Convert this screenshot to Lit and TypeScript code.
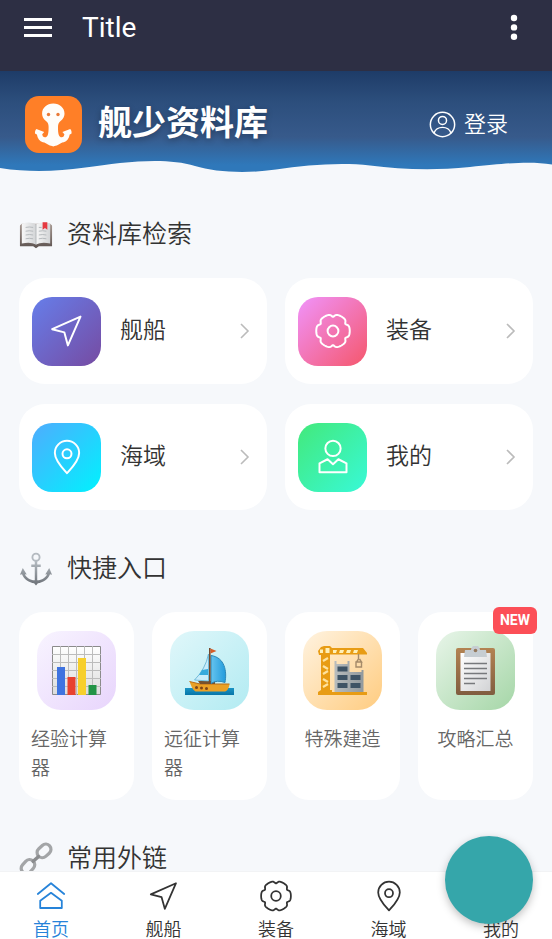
import { LitElement, html, css, svg } from "lit";
import { customElement, property } from "lit/decorators.js";

// Six round lobes parted by narrow notches.
const gearPath = (() => {
  const points: string[] = [];
  for (let deg = 0; deg < 360; deg += 3) {
    const fromNotch = Math.abs((deg % 60) - 30);
    const r = 18.6 - 2.8 * Math.exp(-((fromNotch / 8) ** 2));
    const a = (deg * Math.PI) / 180;
    points.push(`${(20 + r * Math.cos(a)).toFixed(2)} ${(20 + r * Math.sin(a)).toFixed(2)}`);
  }
  return `M${points.join("L")}z`;
})();

const shapes: Record<string, any> = {
  ship: svg`<path d="M35 4 3.500 18l13.500 3.500L21 36z" />`,
  gear: svg`<path d=${gearPath} /><circle cx="20" cy="20" r="6" />`,
  pin: svg`<path d="M20 38C16 33.500 6.500 24 6.500 15.500a13.500 13.500 0 0 1 27 0c0 8.500-9.500 18-13.500 22.500z" /><circle cx="20" cy="16.500" r="5" />`,
  user: svg`<circle cx="20" cy="10.500" r="8.500" /><path d="M5 37V27l9-4.500 6 5.500 6-5.500 9 4.500v10z" />`,
  home: svg`<path d="M3.500 17.500 20 4l16.500 13.500M6.500 35V26L20 16l13.500 10v9z" />`,
  account: svg`<circle cx="20" cy="20" r="18" /><circle cx="20" cy="14" r="6" /><path d="M7.500 32.500c4-11 21-11 25 0" />`,
};

@customElement("line-icon")
class LineIcon extends LitElement {
  @property() name = "ship";
  static styles = css`
    :host { display: block; }
    .shape { display: block; width: 100%; height: 100%; fill: none; stroke: currentColor; stroke-width: 2.2; stroke-linejoin: round; stroke-linecap: round; }
  `;
  render() {
    return html`<svg class="shape" viewBox="0 0 40 40" aria-hidden="true">${shapes[this.name]}</svg>`;
  }
}

const book = svg`
  <defs>
    <linearGradient id="cover" x2="0" y2="1"><stop stop-color="#a89a93"/><stop offset="1" stop-color="#5d5350"/></linearGradient>
    <linearGradient id="leaf"><stop stop-color="#f7f7f7"/><stop offset="1" stop-color="#d3d5d7"/></linearGradient>
  </defs>
  <path fill="url(#cover)" d="M1 8 3 6h30l2 2v22H21l-3 2-3-2H1z"/>
  <path fill="url(#leaf)" d="M3 6q9-3 15 1v21q-6-3-15-1z"/>
  <path fill="url(#leaf)" d="M33 6q-9-3-15 1v21q6-3 15-1z"/>
  <path fill="#e53940" d="M25 4.500h5v8l-2.500-2-2.500 2z"/>
  <path fill="none" stroke="#b3b7ba" d="M7 10q4-1 8 0M7 14q4-1 8 0M7 18q4-1 8 0M7 22q4-1 8 0M21 10h3M21 14q4-1 8 0M21 18q4-1 8 0M21 22q4-1 8 0M18 7v21"/>`;

const anchor = svg`
  <defs><linearGradient id="steel" x2="0" y2="1"><stop stop-color="#b6bdc3"/><stop offset="1" stop-color="#6b7076"/></linearGradient></defs>
  <circle cx="18" cy="5.500" r="3.800" fill="none" stroke="#b4bac0" stroke-width="2"/>
  <path fill="url(#steel)" d="M16.700 9h2.600v4.200H23v2.600h-3.700V30c5-.4 9-3 10.500-6.500l-2 .3L32 17l3 7-2.200-.5C31 29 25 32.500 20 33l-2 2.500-2-2.500C11 32.500 5 29 3.200 23.500L1 24l3-7 4.200 6.800-2-.3C7.700 27 11.700 29.600 16.700 30V15.800H13v-2.600h3.700z"/>`;

const chain = svg`
  <g fill="none" stroke="#a3a5a7" stroke-width="3.400">
    <rect x="-5.500" y="-8" width="11" height="16" rx="5.500" transform="translate(26.500 9.500) rotate(48)"/>
    <rect x="-5.500" y="-8" width="11" height="16" rx="5.500" transform="translate(9.500 26) rotate(42)"/>
  </g>
  <path d="m15 20.500 5.500-5" stroke="#8b8d8f" stroke-width="3.600" stroke-linecap="round"/>`;

const chart = svg`
  <defs><linearGradient id="paper" x2="0" y2="1"><stop stop-color="#fff"/><stop offset="1" stop-color="#dcdcdc"/></linearGradient></defs>
  <path fill="url(#paper)" stroke="#8b8b8b" d="M.5.500h48v48H.5z"/>
  <path fill="none" stroke="#bcbcbc" d="M0 8.500h49M0 16.500h49M0 24.500h49M0 32.500h49M0 40.500h49M8.500 0v49M16.500 0v49M24.500 0v49M32.500 0v49M40.500 0v49"/>
  <path fill="#3f73e0" d="M5 21h8v28H5z"/><path fill="#e8412f" d="M15.500 31h8v18h-8z"/><path fill="#f7cf2c" d="M26 12h8v37h-8z"/><path fill="#219446" d="M36.500 39h8v10h-8z"/>`;

const boat = svg`
  <defs>
    <linearGradient id="sail"><stop stop-color="#66c4ee"/><stop offset="1" stop-color="#229bdc"/></linearGradient>
    <linearGradient id="sea" x2="0" y2="1"><stop stop-color="#1a94c4"/><stop offset="1" stop-color="#0675a8"/></linearGradient>
  </defs>
  <path fill="url(#sea)" d="M0 42h49v7H0z"/>
  <path fill="#eaa126" d="M4.500 35.500 15 38h29.500c-.5 5-3 7.500-5 7.500h-29C7 43 6 39 4.500 35.500z"/>
  <path fill="none" stroke="#b96d17" d="M4.500 35.500 15 38h29.500"/>
  <path fill="#77512d" d="M13 35h17v3H15z"/>
  <path fill="#c8edfb" stroke="#5eaed0" stroke-width=".8" d="M23.500 8q-3 15-14 26l14 1z"/>
  <path fill="#35aadd" d="m17 24 6-1v6h-9z"/>
  <path fill="url(#sail)" stroke="#2b87b7" d="M26 9.500c14 2 16 16 14 27q-8-3-14 1z"/>
  <path fill="#76492c" d="M24 2h1.600v36H24z"/><path fill="#d65d28" d="m25.500 2.500 6 2.500-6 2.500z"/>
  <g fill="#7b451b"><circle cx="11.500" cy="41.500" r="1.500"/><circle cx="16.500" cy="42" r="1.500"/><circle cx="21.500" cy="42.500" r="1.500"/></g>`;

const crane = svg`
  <defs><linearGradient id="wall"><stop stop-color="#b8bcbd"/><stop offset="1" stop-color="#92999d"/></linearGradient></defs>
  <path fill="url(#wall)" d="M16.500 15h2v3h11v-3h2v11h12v-2h2v22h-29z"/>
  <path fill="#3e5365" d="M19.500 20.500h10v5h-10zM19.500 29h10v5h-10zM19.500 37h10v5h-10zM32.500 29h10v5h-10zM32.500 37h10v5h-10z"/>
  <path fill="#e89c14" d="M0 5 3 1l3-1h6l2 2h31l4 5v1.500H12V44h2v2h35v3H0v-3l3-2V9H1z"/>
  <path fill="none" stroke="#ffe39e" stroke-width="2.200" d="M5 15l5-3M5 20l5 3M5 28l5-3M5 33l5 3M5 41l5-3"/>
  <path fill="#fff0b8" d="M2 3.500h3v3.500H2zM7.500 2h4v5h-4zM15 4h4l-1 3h-3zM22 4h4l-1 3h-4zM29 4h4l-1 3h-4zM36 4h4l-1 3h-4z"/>
  <path fill="none" stroke="#a68b69" stroke-width="1.400" d="M40.500 8v5l-2 3h5l-2-3M38 16h5.500v5H38z"/>`;

const clipboard = svg`
  <defs>
    <linearGradient id="wood" x2="0" y2="1"><stop stop-color="#b38352"/><stop offset="1" stop-color="#805d3f"/></linearGradient>
    <linearGradient id="sheet" x2="1" y2="1"><stop stop-color="#fff"/><stop offset="1" stop-color="#d2d3d5"/></linearGradient>
  </defs>
  <rect x="5" y="2" width="39" height="47" rx="2" fill="url(#wood)"/>
  <path fill="url(#sheet)" d="M9.500 7h30v38h-30z"/>
  <path fill="#c6cdd2" d="M14 4h6a4.500 4.500 0 0 1 9 0h6l1 7H13z"/><circle cx="24.500" cy="4.500" r="1.800" fill="#93785b"/>
  <path stroke="#77797c" stroke-width="1.400" d="M13 17.500h23M13 22.500h23M13 27.500h23M13 32.500h23M13 37.500h11"/>`;

const logo = svg`
  <rect width="57" height="57" rx="14" fill="#ff7f27"/>
  <path fill="#fffdf9" d="M28.300 7.500c6.500 0 11.200 4.500 11.200 10 0 4-2.500 6.500-4.700 8.300-1.300 1.200-1.800 3-1.800 5.200 0 3 .1 6 .8 8 1 2.600 3.600 3 5 1.200l.6-2-2-2.200 7.800-3c1.300 1.300 1.700 3 1.200 4.800l-1.700.7c-.6 4-2.700 6.700-6 7.700-2 .3-3.700 1.300-5.500 2.600-2.200 1.300-3 .9-4.900 1.700-1.900-.8-2.700-.4-4.900-1.700-1.800-1.300-3.500-2.300-5.500-2.600-3.300-1-5.400-3.700-6-7.700l-1.700-.7c-.5-1.800-.1-3.500 1.200-4.800l7.800 3-2 2.200.6 2c1.400 1.800 4 1.400 5-1.200.7-2 .8-5 .8-8 0-2.200-.5-4-1.800-5.200-2.200-1.800-4.700-4.300-4.700-8.300 0-5.500 4.700-10 11.200-10z"/>
  <circle cx="23.500" cy="18.500" r="1.700" fill="#e97a38"/><circle cx="33" cy="18.500" r="1.700" fill="#e97a38"/>`;

@customElement("app-root")
class AppRoot extends LitElement {
  static styles = css`
    :host {
      display: flex; flex-direction: column; height: 100vh; position: relative; overflow: hidden;
      background: #f6f8fb; color: #333;
      font-family: Roboto, "Noto Sans CJK SC", sans-serif; font-weight: 350;
    }
    * { box-sizing: border-box; }
    button { font: inherit; color: inherit; background: none; border: 0; padding: 0; }
    a { color: inherit; text-decoration: none; }
    h1, h2 { margin: 0; font-weight: inherit; }
    svg { display: block; }
    .bar { display: flex; align-items: center; gap: 26px; height: 71px; padding: 0 20px 16px; background: #2d2f44; color: #fff; flex: none; }
    .bar-title { flex: 1; font-size: 28px; line-height: 36px; font-weight: 400; }
    .menu, .more { width: 36px; height: 28px; display: grid; place-items: center; }
    .page { flex: 1; min-height: 0; overflow-y: auto; scrollbar-width: none; }
    .hero { display: flex; flex-direction: column; height: 106px; background: linear-gradient(#1e3c68 0, #2c4e7c 30px, #375a8b 66px, #2f78ba 94px, #2f78ba 100%); }
    .hero-row { display: flex; align-items: center; gap: 16px; padding: 25px 44px 8px 25px; flex: 1; color: #fff; }
    .logo { width: 57px; height: 57px; flex: none; }
    .brand { flex: 1; padding-bottom: 4px; font-size: 34px; line-height: 40px; font-weight: 700; text-shadow: 0 2px 6px rgba(0, 0, 0, .3); }
    .login { display: flex; align-items: center; gap: 8px; font-size: 22px; line-height: 32px; }
    .login-icon { width: 27px; height: 27px; }
    .wave { width: 100%; height: 16px; flex: none; }
    .content { display: flex; flex-direction: column; gap: 41px; padding: 40px 19px; }
    .section { display: flex; flex-direction: column; gap: 25px; }
    .heading { display: flex; align-items: center; gap: 14px; font-size: 25px; line-height: 36px; }
    .emoji { width: 34px; height: 34px; }
    .cards { display: grid; grid-template-columns: 1fr 1fr; gap: 20px 18px; }
    .card { display: flex; align-items: center; height: 106px; padding: 0 17px 0 13px; background: #fff; border-radius: 26px; font-size: 23px; line-height: 32px; }
    .tile { display: grid; place-items: center; width: 69px; height: 69px; margin-right: 19px; border-radius: 20px; color: #fff; }
    .tile-icon { width: 36px; height: 36px; }
    .card-label { flex: 1; }
    .violet { background: linear-gradient(135deg, #667eea, #764ba2); }
    .pink { background: linear-gradient(135deg, #f093fb, #f5576c); }
    .sky { background: linear-gradient(135deg, #4facfe, #00f2fe); }
    .green { background: linear-gradient(135deg, #43e97b, #38f9d7); }
    .quick { display: grid; grid-template-columns: repeat(4, 1fr); gap: 18px; }
    .entry { position: relative; display: flex; flex-direction: column; align-items: center; gap: 15px; padding: 19px 12px 17px; background: #fff; border-radius: 24px; color: #666; font-size: 19px; line-height: 29px; }
    .picture { display: grid; place-items: center; width: 79px; height: 79px; border-radius: 24px; }
    .art { width: 49px; height: 49px; }
    .lilac { background: linear-gradient(135deg, #f8f4ff, #e8d5fc); }
    .aqua { background: linear-gradient(135deg, #e0f7fa, #b2ebf2); }
    .amber { background: linear-gradient(135deg, #fff3e0, #ffcc80); }
    .mint { background: linear-gradient(135deg, #e8f5e9, #a5d6a7); }
    .badge { position: absolute; top: -5px; right: -4px; padding: 0 7px; border-radius: 6px; background: #fc4f57; color: #fff; font-size: 14px; line-height: 27px; font-weight: 700; }
    .tabs { display: flex; justify-content: space-between; flex: none; padding: 8px 32px 0; height: 68px; background: #fff; border-top: 1px solid #f2f3f5; }
    .tab { display: flex; flex-direction: column; align-items: center; gap: 5px; width: 38px; font-size: 18px; line-height: 26px; white-space: nowrap; }
    .tab-icon { width: 32px; height: 32px; }
    .active { color: #2683d9; }
    .fab { position: absolute; right: 19px; bottom: 15px; width: 88px; height: 88px; border-radius: 50%; background: #35a6aa; box-shadow: 0 3px 8px rgba(0, 0, 0, .25); }
  `;

  cards = [
    ["ship", "舰船", "violet"],
    ["gear", "装备", "pink"],
    ["pin", "海域", "sky"],
    ["user", "我的", "green"],
  ];
  entries = [
    { art: chart, label: "经验计算器", tone: "lilac", badge: "" },
    { art: boat, label: "远征计算器", tone: "aqua", badge: "" },
    { art: crane, label: "特殊建造", tone: "amber", badge: "" },
    { art: clipboard, label: "攻略汇总", tone: "mint", badge: "NEW" },
  ];
  tabs = [["home", "首页"], ["ship", "舰船"], ["gear", "装备"], ["pin", "海域"], ["user", "我的"]];

  heading(art: unknown, text: string) {
    return html`<h2 class="heading"><svg class="emoji" viewBox="0 0 36 36" aria-hidden="true">${art}</svg>${text}</h2>`;
  }

  render() {
    return html`
      <header class="bar">
        <button class="menu" aria-label="Menu"><svg width="28" height="20" fill="#fff"><path d="M0 0h28v3H0zM0 8h28v3H0zM0 16h28v3H0z"/></svg></button>
        <h1 class="bar-title">Title</h1>
        <button class="more" aria-label="More"><svg width="8" height="28" fill="#fff"><circle cx="4" cy="4" r="3.200"/><circle cx="4" cy="13.400" r="3.200"/><circle cx="4" cy="22.800" r="3.200"/></svg></button>
      </header>
      <main class="page">
        <div class="hero">
          <div class="hero-row">
            <svg class="logo" viewBox="0 0 57 57" aria-hidden="true">${logo}</svg>
            <h2 class="brand">舰少资料库</h2>
            <button class="login"><line-icon class="login-icon" name="account"></line-icon>登录</button>
          </div>
          <svg class="wave" viewBox="0 0 552 16" preserveAspectRatio="none" aria-hidden="true">
            <path fill="#f6f8fb" d="M0 7C50 15 90 5 120 2S175-1 195 5 245 13 276 8.500 340 1 370 4.500 430 10 470 6 530 0 552 3.500V17H0z"/>
          </svg>
        </div>
        <div class="content">
          <section class="section">
            ${this.heading(book, "资料库检索")}
            <div class="cards">
              ${this.cards.map(([icon, label, tone]) => html`
                <a class="card" href="#${icon}">
                  <span class="tile ${tone}"><line-icon class="tile-icon" name=${icon}></line-icon></span>
                  <span class="card-label">${label}</span>
                  <svg width="10" height="16" fill="none" stroke="#bbb" stroke-width="1.600"><path d="m1 1 7 7-7 7"/></svg>
                </a>`)}
            </div>
          </section>
          <section class="section">
            ${this.heading(anchor, "快捷入口")}
            <div class="quick">
              ${this.entries.map((e) => html`
                <a class="entry" href="#tools">
                  <span class="picture ${e.tone}"><svg class="art" viewBox="0 0 49 49" aria-hidden="true">${e.art}</svg></span>
                  <span>${e.label}</span>
                  ${e.badge ? html`<span class="badge">${e.badge}</span>` : ""}
                </a>`)}
            </div>
          </section>
          <section class="section">${this.heading(chain, "常用外链")}</section>
        </div>
      </main>
      <nav class="tabs">
        ${this.tabs.map(([icon, label], i) => html`
          <a class="tab ${i === 0 ? "active" : ""}" href="#${icon}"><line-icon class="tab-icon" name=${icon}></line-icon>${label}</a>`)}
      </nav>
      <button class="fab" aria-label="Quick action"></button>
    `;
  }
}
